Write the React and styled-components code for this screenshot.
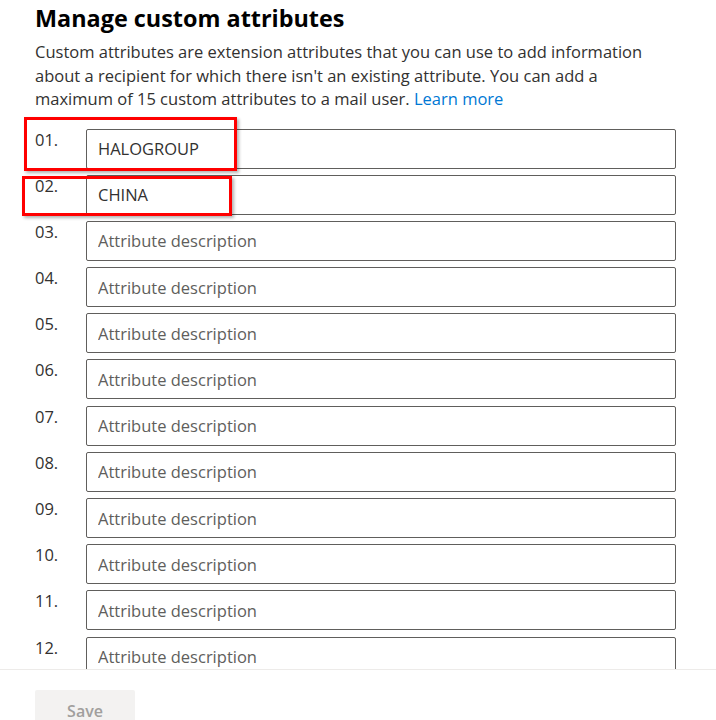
import React from 'react'
import styled, { createGlobalStyle } from 'styled-components'

const GlobalStyle = createGlobalStyle`
  html, body {
    margin: 0;
    padding: 0;
    background: #ffffff;
  }
  body {
    font-family: "Segoe UI", "Open Sans", "Liberation Sans", sans-serif;
    color: #323130;
  }
`

const values = ['HALOGROUP', 'CHINA']
const rows = Array.from({ length: 15 }, (_, i) => ({
  label: String(i + 1).padStart(2, '0') + '.',
  value: values[i] || ''
}))

const App = () => {
  return (
    <Page>
      <GlobalStyle />
      <Content>
        <Title>Manage custom attributes</Title>
        <Description>
          Custom attributes are extension attributes that you can use to add information
          about a recipient for which there isn't an existing attribute. You can add a
          maximum of 15 custom attributes to a mail user. <Link href="#">Learn more</Link>
        </Description>
        <List>
          {rows.map(row => (
            <Row key={row.label}>
              <Label>{row.label}</Label>
              <Field placeholder="Attribute description" defaultValue={row.value} />
            </Row>
          ))}
        </List>
        <Highlight $top={117} $left={24} $width={213} $height={54} />
        <Highlight $top={176} $left={22} $width={210} $height={40} />
      </Content>
      <Footer>
        <SaveButton disabled>Save</SaveButton>
      </Footer>
    </Page>
  )
}

const Page = styled.div`
  height: 720px;
  display: flex;
  flex-direction: column;
  overflow: hidden;
`
const Content = styled.div`
  position: relative;
  flex: 1;
  overflow: hidden;
  padding: 0 40px 0 35px;
`
const Title = styled.h1`
  margin: 0;
  padding-top: 2px;
  font-size: 23.4px;
  line-height: 32px;
  font-weight: 700;
  color: #000000;
`
const Description = styled.p`
  margin: 6px 0 0;
  font-size: 16.5px;
  line-height: 23.5px;
  color: #323130;
  max-width: 630px;
`
const Link = styled.a`
  color: #0078d4;
  text-decoration: none;
`
const List = styled.div`
  display: flex;
  flex-direction: column;
  gap: 6.2px;
  margin-top: 18px;
`
const Row = styled.div`
  display: flex;
  align-items: flex-start;
`
const Label = styled.span`
  width: 51px;
  flex-shrink: 0;
  font-size: 16.5px;
  line-height: 22px;
  color: #323130;
`
const Field = styled.input`
  box-sizing: border-box;
  width: 590px;
  height: 40px;
  padding: 0 11px;
  border: 1px solid #605e5c;
  border-radius: 2px;
  font-family: inherit;
  font-size: 16.5px;
  color: #323130;
  outline: none;
  &::placeholder {
    color: #605e5c;
  }
`
const Highlight = styled.div`
  position: absolute;
  top: ${p => p.$top}px;
  left: ${p => p.$left}px;
  width: ${p => p.$width}px;
  height: ${p => p.$height}px;
  box-sizing: border-box;
  border: 3px solid #ff0000;
  box-shadow: 2px 2px 3px rgba(0, 0, 0, 0.3);
  pointer-events: none;
`
const Footer = styled.div`
  box-sizing: border-box;
  flex-shrink: 0;
  height: 51px;
  overflow: hidden;
  border-top: 1px solid #edebe9;
  padding: 20px 35px 0;
`
const SaveButton = styled.button`
  width: 100px;
  height: 42px;
  padding: 0;
  border: none;
  border-radius: 2px;
  background: #f3f2f1;
  color: #a19f9d;
  font-family: inherit;
  font-size: 16px;
  font-weight: 600;
`

export default App
